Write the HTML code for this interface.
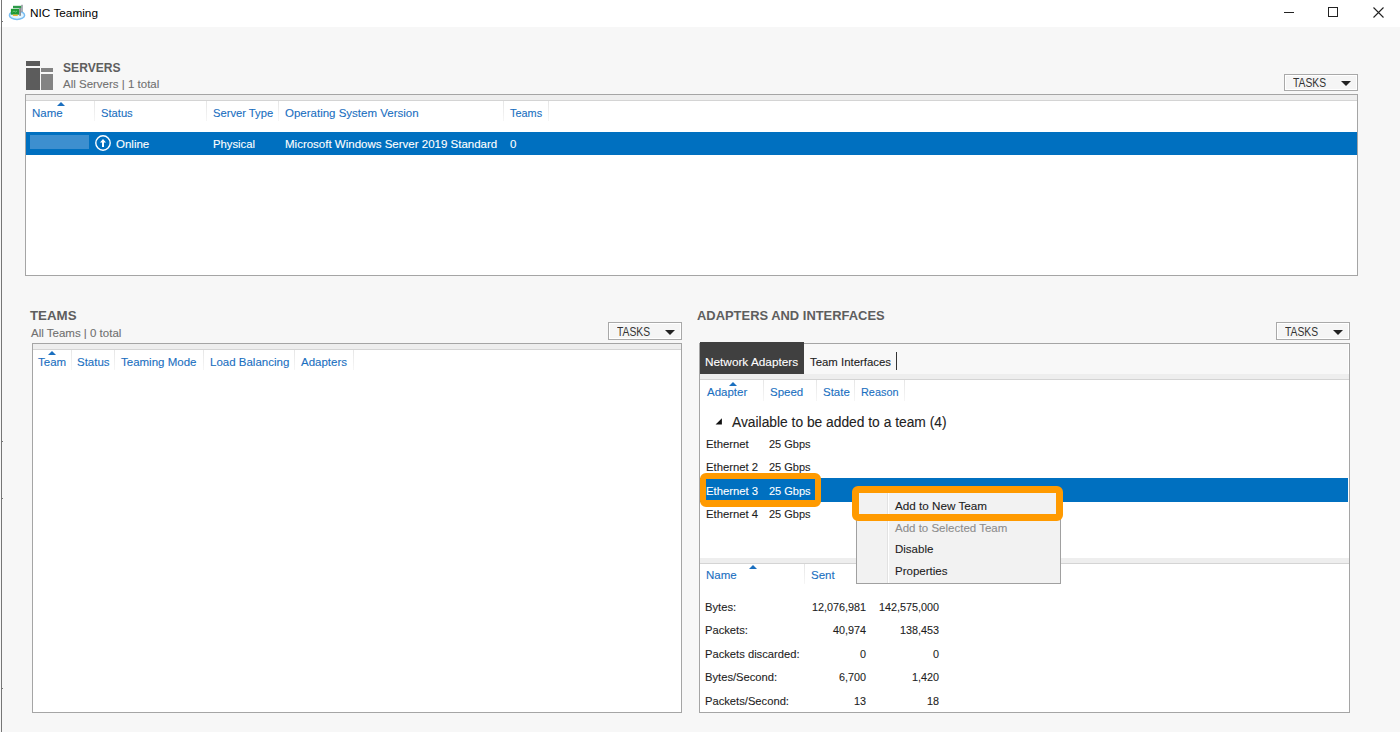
<!DOCTYPE html>
<html><head><meta charset="utf-8">
<style>
*{margin:0;padding:0;box-sizing:border-box}
html,body{width:1400px;height:732px;overflow:hidden;background:#f7f7f7;font-family:"Liberation Sans",sans-serif;color:#1e1e1e}
.a{position:absolute}
.t{position:absolute;white-space:nowrap;font-size:11.5px;line-height:14px;-webkit-text-stroke:0.1px currentColor}
.hd{color:#1a6fbf}
.h1{position:absolute;white-space:nowrap;font-weight:bold;color:#5e5e5e;line-height:16px}
.sub{color:#707070}
.box{position:absolute;border:1px solid #a5a5a5;background:#fff}
.strip{position:absolute;background:#eeeeee;border-bottom:1px solid #d4d4d4}
.sep{position:absolute;width:1px;background:linear-gradient(#e6e6e6,#f6f6f6)}
.tasks{position:absolute;border:1px solid #a9a9a9;box-shadow:inset 0 0 0 1px #fff;background:#f5f5f5;width:74px;height:17px}
.tasks span{position:absolute;left:8px;bottom:0;font-size:12px;line-height:14px;color:#333;transform:scaleX(0.86);transform-origin:0 0}
.tasks i{position:absolute;right:6px;bottom:4px;width:0;height:0;border-left:5px solid transparent;border-right:5px solid transparent;border-top:5px solid #222}
.arr{position:absolute;width:0;height:0;border-left:4px solid transparent;border-right:4px solid transparent;border-bottom:4px solid #1a6fbf}
.sel{position:absolute;background:#0070c0}
.w{color:#fff}
.orng{position:absolute;border:7px solid #ff9a00;border-radius:6px}
</style></head><body>
<!-- title bar -->
<div class="a" style="left:0;top:0;width:1400px;height:27px;background:#fff"></div>
<div class="a" style="left:1px;top:0;width:1px;height:732px;background:#767676"></div>
<div class="a" style="left:2px;top:21px;width:1px;height:1px;background:#777"></div>
<div class="a" style="left:2px;top:441px;width:1px;height:1px;background:#777"></div>
<div class="a" style="left:2px;top:498px;width:1px;height:1px;background:#777"></div>
<div class="a" style="left:2px;top:688px;width:1px;height:1px;background:#777"></div>
<svg class="a" style="left:0;top:0" width="30" height="25" viewBox="0 0 30 25">
  <ellipse cx="17" cy="15.2" rx="7.6" ry="4.2" fill="#e4f4fd" stroke="#78bdf2" stroke-width="1.5"/>
  <rect x="13" y="5.8" width="8.5" height="2.4" fill="#2e9a4a"/>
  <rect x="21.2" y="4.8" width="1.6" height="7.2" fill="#9a9ea6"/>
  <rect x="10.9" y="8.8" width="8.3" height="5.9" fill="#1f9a36"/>
  <path d="M12.5 12 L14 11 L15.5 12 L17 11" stroke="#7fd08a" stroke-width="0.8" fill="none"/>
  <rect x="19.2" y="7.9" width="1.8" height="7.9" fill="#8a8e96"/>
  <rect x="12.9" y="14.6" width="4.8" height="1.4" fill="#f0b430"/>
</svg>
<div class="t" style="left:30px;top:6px;font-size:11.8px;color:#000;-webkit-text-stroke:0">NIC Teaming</div>
<!-- window controls -->
<div class="a" style="left:1284px;top:12px;width:10px;height:1px;background:#222"></div>
<div class="a" style="left:1328px;top:7px;width:10px;height:10px;border:1px solid #222"></div>
<svg class="a" style="left:1373px;top:7px" width="11" height="11" viewBox="0 0 11 11"><path d="M0.5 0.5 L10.5 10.5 M10.5 0.5 L0.5 10.5" stroke="#222" stroke-width="1.1"/></svg>

<!-- SERVERS -->
<div class="a" style="left:26px;top:61px;width:14px;height:5px;background:#5c5c5c"></div>
<div class="a" style="left:26px;top:68px;width:14px;height:22px;background:#5c5c5c"></div>
<div class="a" style="left:41px;top:68px;width:12px;height:4px;background:#838383"></div>
<div class="a" style="left:41px;top:74px;width:12px;height:16px;background:#838383"></div>
<div class="h1" style="left:63px;top:60px;font-size:13.3px;transform:scaleX(0.91);transform-origin:0 0">SERVERS</div>
<div class="t sub" style="left:63px;top:77px">All Servers | 1 total</div>
<div class="tasks" style="left:1284px;top:74px"><span>TASKS</span><i></i></div>

<div class="box" style="left:25px;top:94px;width:1333px;height:182px"></div>
<div class="strip" style="left:26px;top:95px;width:1331px;height:6px"></div>
<div class="arr" style="left:57px;top:102px"></div>
<div class="sep" style="left:94px;top:101px;height:20px"></div>
<div class="sep" style="left:206px;top:101px;height:20px"></div>
<div class="sep" style="left:278px;top:101px;height:20px"></div>
<div class="sep" style="left:503px;top:101px;height:20px"></div>
<div class="sep" style="left:548px;top:101px;height:20px"></div>
<div class="t hd" style="left:32px;top:106px">Name</div>
<div class="t hd" style="left:101px;top:106px;font-size:11.2px">Status</div>
<div class="t hd" style="left:213px;top:106px;font-size:11.2px">Server Type</div>
<div class="t hd" style="left:285px;top:106px">Operating System Version</div>
<div class="t hd" style="left:510px;top:106px;font-size:10.9px">Teams</div>
<div class="sel" style="left:26px;top:132px;width:1331px;height:23px"></div>
<div class="a" style="left:30px;top:135px;width:59px;height:14px;background:#3d8fcf"></div>
<svg class="a" style="left:95px;top:135px" width="16" height="16" viewBox="0 0 16 16"><circle cx="8" cy="8" r="7.2" fill="none" stroke="#fff" stroke-width="1.4"/><path d="M8 4 L11 7.5 L9 7.5 L9 12 L7 12 L7 7.5 L5 7.5 Z" fill="#fff"/></svg>
<div class="t w" style="left:116px;top:137px">Online</div>
<div class="t w" style="left:213px;top:137px;font-size:11.3px">Physical</div>
<div class="t w" style="left:285px;top:137px">Microsoft Windows Server 2019 Standard</div>
<div class="t w" style="left:510px;top:137px">0</div>

<!-- TEAMS -->
<div class="h1" style="left:30px;top:308px;font-size:13.3px">TEAMS</div>
<div class="t sub" style="left:31px;top:326px">All Teams | 0 total</div>
<div class="tasks" style="left:608px;top:322px;height:18px"><span>TASKS</span><i></i></div>
<div class="box" style="left:32px;top:343px;width:650px;height:370px"></div>
<div class="strip" style="left:33px;top:344px;width:648px;height:6px"></div>
<div class="arr" style="left:48px;top:351px"></div>
<div class="sep" style="left:71px;top:350px;height:20px"></div>
<div class="sep" style="left:114px;top:350px;height:20px"></div>
<div class="sep" style="left:203px;top:350px;height:20px"></div>
<div class="sep" style="left:294px;top:350px;height:20px"></div>
<div class="sep" style="left:353px;top:350px;height:20px"></div>
<div class="t hd" style="left:38px;top:355px">Team</div>
<div class="t hd" style="left:77px;top:355px">Status</div>
<div class="t hd" style="left:121px;top:355px">Teaming Mode</div>
<div class="t hd" style="left:210px;top:355px">Load Balancing</div>
<div class="t hd" style="left:301px;top:355px">Adapters</div>

<!-- ADAPTERS AND INTERFACES -->
<div class="h1" style="left:697px;top:308px;font-size:13.3px;transform:scaleX(0.972);transform-origin:0 0">ADAPTERS AND INTERFACES</div>
<div class="tasks" style="left:1276px;top:322px;height:18px"><span>TASKS</span><i></i></div>
<div class="box" style="left:699px;top:343px;width:651px;height:370px"></div>
<div class="a" style="left:700px;top:344px;width:648px;height:30px;background:#f8f8f8"></div>
<div class="a" style="left:700px;top:342px;width:104px;height:32px;background:#404040"></div>
<div class="t w" style="left:705px;top:355px;font-size:11.8px">Network Adapters</div>
<div class="t" style="left:810px;top:355px;font-size:11.4px;color:#222">Team Interfaces</div>
<div class="a" style="left:896px;top:352px;width:1px;height:18px;background:#333"></div>
<div class="strip" style="left:700px;top:374px;width:649px;height:6px"></div>
<div class="arr" style="left:729px;top:382px"></div>
<div class="sep" style="left:763px;top:380px;height:21px"></div>
<div class="sep" style="left:816px;top:380px;height:21px"></div>
<div class="sep" style="left:854px;top:380px;height:21px"></div>
<div class="sep" style="left:904px;top:380px;height:21px"></div>
<div class="t hd" style="left:707px;top:385px">Adapter</div>
<div class="t hd" style="left:770px;top:385px">Speed</div>
<div class="t hd" style="left:823px;top:385px">State</div>
<div class="t hd" style="left:861px;top:385px;font-size:10.9px">Reason</div>

<svg class="a" style="left:715px;top:418px" width="8" height="8" viewBox="0 0 8 8"><path d="M6.9 0.2 L6.9 6.6 L0.6 6.6 Z" fill="#111"/></svg>
<div class="t" style="left:732px;top:415px;font-size:13.8px;line-height:16px;color:#222">Available to be added to a team (4)</div>

<div class="t" style="left:706px;top:437px;font-size:11.3px">Ethernet</div>
<div class="t" style="left:769px;top:437px;font-size:11px">25 Gbps</div>
<div class="t" style="left:706px;top:460px;font-size:11.3px">Ethernet 2</div>
<div class="t" style="left:769px;top:460px;font-size:11px">25 Gbps</div>
<div class="sel" style="left:700px;top:478px;width:648px;height:24px"></div>
<div class="t w" style="left:706px;top:484px;font-size:11.3px">Ethernet 3</div>
<div class="t w" style="left:769px;top:484px;font-size:11px">25 Gbps</div>
<div class="t" style="left:706px;top:507px;font-size:11.3px">Ethernet 4</div>
<div class="t" style="left:769px;top:507px;font-size:11px">25 Gbps</div>
<div class="orng" style="left:700px;top:473px;width:121px;height:34px;border-width:6px 6px 7px 6px"></div>

<div class="strip" style="left:700px;top:558px;width:649px;height:6px"></div>
<div class="arr" style="left:749px;top:565px"></div>
<div class="sep" style="left:804px;top:564px;height:20px"></div>
<div class="t hd" style="left:706px;top:568px">Name</div>
<div class="t hd" style="left:811px;top:568px">Sent</div>

<div class="t" style="left:705px;top:600px;font-size:11.2px">Bytes:</div>
<div class="t" style="left:705px;top:623px;font-size:11.2px">Packets:</div>
<div class="t" style="left:705px;top:647px;font-size:11.2px">Packets discarded:</div>
<div class="t" style="left:705px;top:670px;font-size:11.2px">Bytes/Second:</div>
<div class="t" style="left:705px;top:694px;font-size:11.2px">Packets/Second:</div>
<div class="t" style="left:766px;top:600px;width:100px;text-align:right;font-size:10.8px">12,076,981</div>
<div class="t" style="left:766px;top:623px;width:100px;text-align:right;font-size:10.8px">40,974</div>
<div class="t" style="left:766px;top:647px;width:100px;text-align:right;font-size:10.8px">0</div>
<div class="t" style="left:766px;top:670px;width:100px;text-align:right;font-size:10.8px">6,700</div>
<div class="t" style="left:766px;top:694px;width:100px;text-align:right;font-size:10.8px">13</div>
<div class="t" style="left:839px;top:600px;width:100px;text-align:right;font-size:10.8px">142,575,000</div>
<div class="t" style="left:839px;top:623px;width:100px;text-align:right;font-size:10.8px">138,453</div>
<div class="t" style="left:839px;top:647px;width:100px;text-align:right;font-size:10.8px">0</div>
<div class="t" style="left:839px;top:670px;width:100px;text-align:right;font-size:10.8px">1,420</div>
<div class="t" style="left:839px;top:694px;width:100px;text-align:right;font-size:10.8px">18</div>

<!-- context menu -->
<div class="a" style="left:856px;top:490px;width:205px;height:94px;background:#f2f2f2;border:1px solid #a0a0a0"></div>
<div class="a" style="left:887px;top:491px;width:1px;height:92px;background:#e2e2e2"></div>
<div class="a" style="left:888px;top:491px;width:1px;height:92px;background:#fff"></div>
<div class="t" style="left:895px;top:499px;font-size:11.7px">Add to New Team</div>
<div class="t" style="left:895px;top:521px;font-size:11.5px;color:#8d8d8d">Add to Selected Team</div>
<div class="t" style="left:895px;top:542px;font-size:11.5px">Disable</div>
<div class="t" style="left:895px;top:564px;font-size:11.5px">Properties</div>
<div class="orng" style="left:852px;top:486px;width:211px;height:35px"></div>
</body></html>
